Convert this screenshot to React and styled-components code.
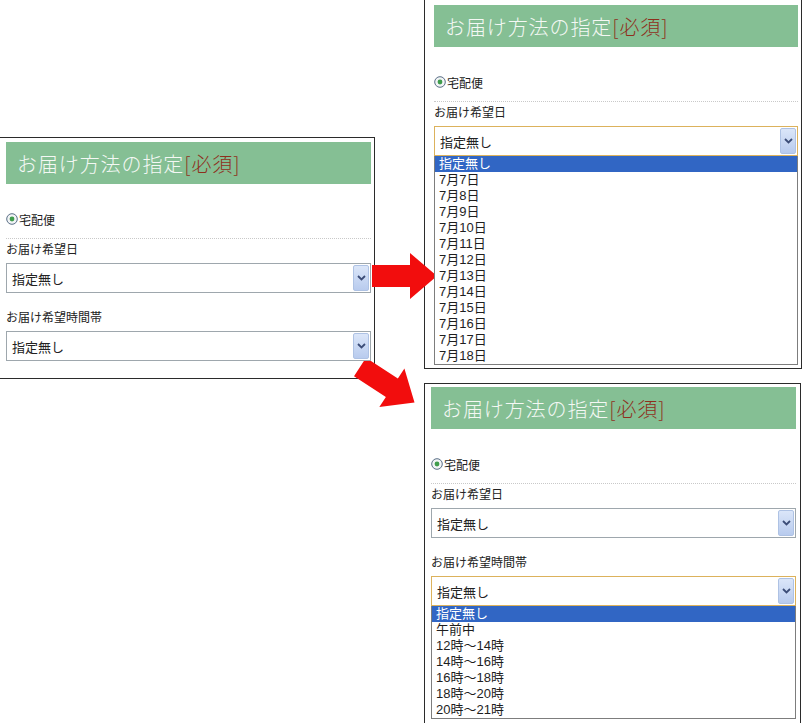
import React from "react";
import styled, { createGlobalStyle } from "styled-components";

const GlobalStyle = createGlobalStyle`
  html, body {
    margin: 0;
    padding: 0;
    background: #fff;
  }
`;

const Page = styled.div`
  position: relative;
  width: 802px;
  height: 723px;
  overflow: hidden;
  display: flex;
  align-items: flex-start;
  background: #fff;
  color: #222;
  font-family: "Noto Sans CJK JP", sans-serif;
`;

const LeftCol = styled.div`
  padding-top: 137px;
`;

const RightCol = styled.div`
  margin-left: 49px;
  display: flex;
  flex-direction: column;
  gap: 14px;
`;

const Shot = styled.section`
  box-sizing: border-box;
  position: relative;
  width: ${(p) => p.$w}px;
  height: ${(p) => p.$h}px;
  padding: ${(p) => p.$pad};
  border: 1px solid #2b2b2b;
  ${(p) => p.$noTop && "border-top: none;"}
  ${(p) => p.$noLeft && "border-left: none;"}
  ${(p) => p.$noBottom && "border-bottom: none;"}
  overflow: hidden;
`;

const Header = styled.h2`
  margin: 0;
  height: 42px;
  display: flex;
  align-items: center;
  padding-left: 11px;
  background: #85bf94;
  color: #f4f8f4;
  font-size: 20px;
  font-weight: 300;
  letter-spacing: 0.9px;
  white-space: nowrap;

  span {
    color: #8e2f1d;
  }
`;

const RadioRow = styled.label`
  display: flex;
  align-items: center;
  gap: 1px;
  height: 16px;
  padding: 27px 0 11px;
  border-bottom: 1px dotted #c9c9c9;
  font-size: 12px;
`;

const Field = styled.div`
  display: flex;
  flex-direction: column;
  gap: 6px;
  margin-top: ${(p) => p.$mt}px;
  visibility: ${(p) => (p.$covered ? "hidden" : "visible")};
`;

const Label = styled.div`
  font-size: 12px;
  line-height: 16px;
`;

const SelectWrap = styled.div`
  position: relative;
  z-index: ${(p) => (p.$open ? 2 : 1)};
`;

const SelectBox = styled.div`
  box-sizing: border-box;
  height: 30px;
  display: flex;
  align-items: center;
  justify-content: space-between;
  padding: 0 1px 0 5px;
  background: #fff;
  border: 1px solid ${(p) => (p.$focus ? "#dcb25c" : "#9ea7ad")};
  font-size: 13px;
`;

const ArrowBtn = styled.div`
  box-sizing: border-box;
  width: 16px;
  height: 26px;
  display: flex;
  align-items: center;
  justify-content: center;
  background: linear-gradient(#dbe6f9, #b8cbee);
  border: 1px solid #aec2e4;
  border-radius: 2px;
`;

const List = styled.ul`
  position: absolute;
  top: 100%;
  left: 0;
  right: 0;
  margin: 0;
  padding: 0;
  list-style: none;
  background: #fff;
  border: 1px solid #7d7d7d;
  border-top: none;
  font-family: "Liberation Sans", "Noto Sans CJK JP", sans-serif;
  font-size: 13px;
  visibility: visible;
`;

const Option = styled.li`
  height: 16px;
  line-height: 16px;
  padding-left: 4px;
  background: ${(p) => (p.$sel ? "#3166c4" : "transparent")};
  color: ${(p) => (p.$sel ? "#fff" : "#1e1e1e")};
`;

const Overlay = styled.svg`
  position: absolute;
  left: 0;
  top: 0;
  pointer-events: none;
`;

const dates = ["指定無し", ...Array.from({ length: 12 }, (_, i) => `7月${i + 7}日`)];
const times = ["指定無し", "午前中", "12時～14時", "14時～16時", "16時～18時", "18時～20時", "20時～21時"];

function Radio() {
  return (
    <svg width="12" height="12" viewBox="0 0 12 12">
      <circle cx="6" cy="6" r="5.3" fill="#f2f4f6" stroke="#5a6f86" strokeWidth="1" />
      <circle cx="6" cy="6" r="2.4" fill="#3f9c4c" />
    </svg>
  );
}

function Chevron() {
  return (
    <svg width="9" height="6" viewBox="0 0 9 6">
      <path d="M1 1 L4.5 4.5 L8 1" fill="none" stroke="#3c4d78" strokeWidth="1.8" />
    </svg>
  );
}

function Select({ focus, options }) {
  return (
    <SelectWrap $open={!!options}>
      <SelectBox $focus={focus}>
        指定無し
        <ArrowBtn>
          <Chevron />
        </ArrowBtn>
      </SelectBox>
      {options && (
        <List>
          {options.map((o, i) => (
            <Option key={o} $sel={i === 0}>
              {o}
            </Option>
          ))}
        </List>
      )}
    </SelectWrap>
  );
}

function Form({ openDate, openTime }) {
  return (
    <>
      <Header>
        お届け方法の指定<span>[必須]</span>
      </Header>
      <RadioRow>
        <Radio />
        宅配便
      </RadioRow>
      <Field $mt={2}>
        <Label>お届け希望日</Label>
        <Select focus={openDate} options={openDate ? dates : null} />
      </Field>
      {/* hidden under the open date list */}
      <Field $mt={16} $covered={openDate}>
        <Label>お届け希望時間帯</Label>
        <Select focus={openTime} options={openTime ? times : null} />
      </Field>
    </>
  );
}

const arrow = "0,-11 38,-11 38,-23 65,0 38,23 38,11 0,11";

export default function App() {
  return (
    <>
      <GlobalStyle />
      <Page>
        <LeftCol>
          <Shot $w={375} $h={242} $pad="4px 3px 0 6px" $noLeft>
            <Form />
          </Shot>
        </LeftCol>
        <RightCol>
          <Shot $w={378} $h={369} $pad="5px 3px 0 9px" $noTop>
            <Form openDate />
          </Shot>
          <Shot $w={377} $h={345} $pad="3px 4px 0 6px" $noBottom>
            <Form openTime />
          </Shot>
        </RightCol>
        <Overlay width="802" height="723" viewBox="0 0 802 723">
          <polygon points={arrow} fill="#f20d0d" transform="translate(372 276)" />
          <polygon points={arrow} fill="#f20d0d" transform="translate(360 367) rotate(33)" />
        </Overlay>
      </Page>
    </>
  );
}
